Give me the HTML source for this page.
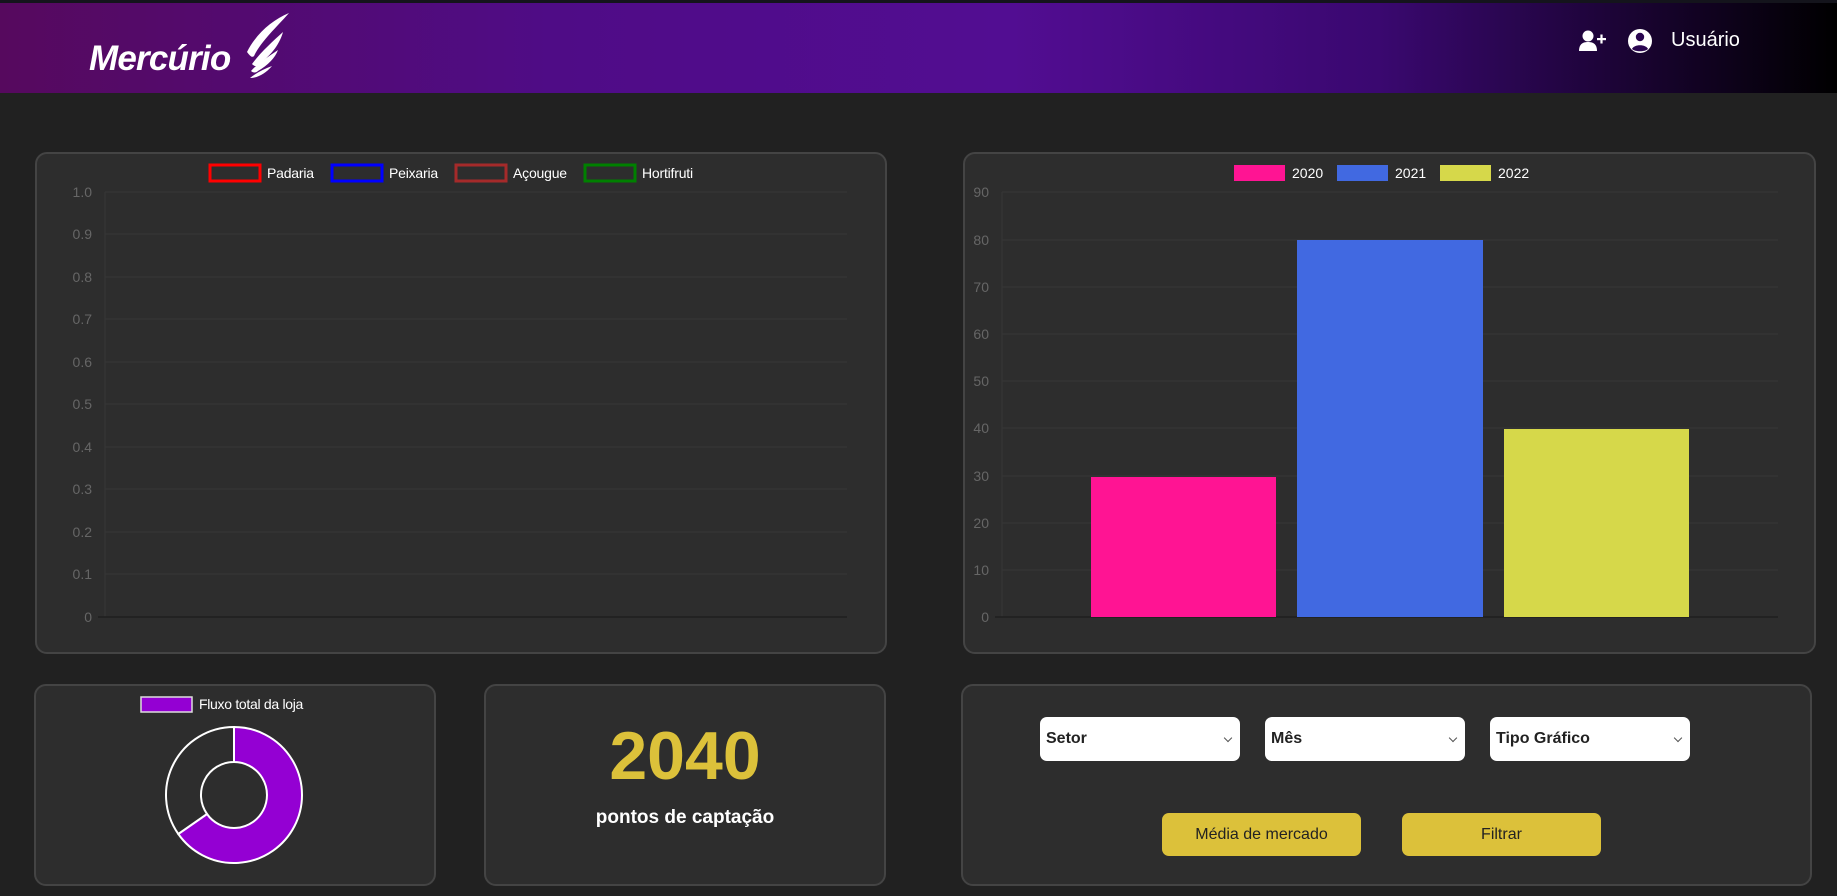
<!DOCTYPE html>
<html><head><meta charset="utf-8"><style>
*{margin:0;padding:0;box-sizing:border-box}
body{width:1837px;height:896px;background:#212121;font-family:"Liberation Sans",sans-serif;overflow:hidden;position:relative}
.hdr{position:absolute;left:0;top:0;width:1837px;height:93px;border-top:3px solid #14141c;background:linear-gradient(90deg,#56095e 0%,#4f0c86 30%,#520d92 55%,#3a0870 75%,#000 100%)}
.card{position:absolute;background:#2d2d2d;border:2px solid #444;border-radius:12px}
.sel{position:absolute;top:717px;height:44px;width:200px;background:#fff;border-radius:7px;font-weight:bold;font-size:16px;color:#222;padding:13px 6px}
.sel:after{content:"";position:absolute;right:9px;top:18px;width:5px;height:5px;border-right:1.3px solid #555;border-bottom:1.3px solid #555;transform:rotate(45deg)}
.btn{position:absolute;top:813px;height:43px;width:199px;background:#dcc13a;border-radius:7px;font-size:16px;color:#222;text-align:center;line-height:43px}
svg{position:absolute;left:0;top:0}
</style></head><body>
<div class="hdr"></div>
<div style="position:absolute;left:89px;top:39px;color:#fff;font-weight:bold;font-style:italic;font-size:35px;letter-spacing:-0.8px">Mercúrio</div>
<div style="position:absolute;left:1671px;top:29px;color:#fff;font-size:20px">Usuário</div>
<div class="card" style="left:35px;top:152px;width:852px;height:502px"></div>
<div class="card" style="left:963px;top:152px;width:853px;height:502px"></div>
<div class="card" style="left:34px;top:684px;width:402px;height:202px"></div>
<div class="card" style="left:484px;top:684px;width:402px;height:202px"></div>
<div class="card" style="left:961px;top:684px;width:851px;height:202px"></div>
<div style="position:absolute;left:484px;top:717px;width:402px;text-align:center;color:#dcc13a;font-weight:bold;font-size:68px">2040</div>
<div style="position:absolute;left:484px;top:807px;width:402px;text-align:center;color:#fff;font-weight:bold;font-size:19px">pontos de captação</div>
<div class="sel" style="left:1040px">Setor</div>
<div class="sel" style="left:1265px">Mês</div>
<div class="sel" style="left:1490px">Tipo Gráfico</div>
<div class="btn" style="left:1162px">Média de mercado</div>
<div class="btn" style="left:1402px">Filtrar</div>
<svg width="1837" height="896" font-family="Liberation Sans, sans-serif">
<g fill="#fff">
<path d="M289 13 C272 20 256 34 247 52 C250 56 252 58 254 56 C262 40 276 28 289 13Z"/>
<path d="M283 32 C272 42 260 53 252 64 C254 66 256 67 258 65 C270 56 279 46 283 32Z"/>
<path d="M278 50 C268 57 258 63 251 71 C253 73 256 73 258 71 C268 65 275 58 278 50Z"/>
<path d="M272 66 C264 69 256 73 250 78 C258 78 266 73 272 66Z"/>
</g>
<g fill="#fff">
<circle cx="1588" cy="36" r="5.5"/>
<path d="M1579 51 C1579 44 1583 42 1588 42 C1593 42 1597 44 1597 51Z"/>
<rect x="1597" y="38" width="9" height="2.2"/><rect x="1600.4" y="34.5" width="2.2" height="9"/>
<circle cx="1640" cy="41" r="12"/>
</g>
<circle cx="1640" cy="37" r="4.2" fill="#2a0650"/>
<path d="M1632 49 C1634 44 1646 44 1648 49 C1645 52 1635 52 1632 49Z" fill="#2a0650"/>
<g stroke="#363636" stroke-width="1">
<line x1="105" y1="192" x2="847" y2="192"/><line x1="105" y1="234" x2="847" y2="234"/><line x1="105" y1="277" x2="847" y2="277"/><line x1="105" y1="319" x2="847" y2="319"/><line x1="105" y1="362" x2="847" y2="362"/><line x1="105" y1="404" x2="847" y2="404"/><line x1="105" y1="447" x2="847" y2="447"/><line x1="105" y1="489" x2="847" y2="489"/><line x1="105" y1="532" x2="847" y2="532"/><line x1="105" y1="574" x2="847" y2="574"/>
<line x1="105" y1="192" x2="105" y2="617"/>
</g>
<line x1="98" y1="617" x2="847" y2="617" stroke="#1e1e1e" stroke-width="1.5"/>
<g fill="#666" font-size="14" text-anchor="end">
<text x="92" y="197">1.0</text><text x="92" y="239">0.9</text><text x="92" y="282">0.8</text><text x="92" y="324">0.7</text><text x="92" y="367">0.6</text><text x="92" y="409">0.5</text><text x="92" y="452">0.4</text><text x="92" y="494">0.3</text><text x="92" y="537">0.2</text><text x="92" y="579">0.1</text><text x="92" y="622">0</text>
</g>
<g fill="none" stroke-width="3">
<rect x="210" y="165" width="50" height="16" stroke="#f00"/>
<rect x="332" y="165" width="50" height="16" stroke="#00f"/>
<rect x="456" y="165" width="50" height="16" stroke="#a52a2a"/>
<rect x="585" y="165" width="50" height="16" stroke="#008000"/>
</g>
<g fill="#fff" font-size="14" letter-spacing="-0.2">
<text x="267" y="178">Padaria</text><text x="389" y="178">Peixaria</text><text x="513" y="178">Açougue</text><text x="642" y="178">Hortifruti</text>
</g>
<g stroke="#363636" stroke-width="1">
<line x1="1002" y1="192" x2="1778" y2="192"/><line x1="1002" y1="240" x2="1778" y2="240"/><line x1="1002" y1="287" x2="1778" y2="287"/><line x1="1002" y1="334" x2="1778" y2="334"/><line x1="1002" y1="381" x2="1778" y2="381"/><line x1="1002" y1="428" x2="1778" y2="428"/><line x1="1002" y1="476" x2="1778" y2="476"/><line x1="1002" y1="523" x2="1778" y2="523"/><line x1="1002" y1="570" x2="1778" y2="570"/>
<line x1="1002" y1="192" x2="1002" y2="617"/>
</g>
<line x1="995" y1="617" x2="1778" y2="617" stroke="#1e1e1e" stroke-width="1.5"/>
<g fill="#666" font-size="14" text-anchor="end">
<text x="989" y="197">90</text><text x="989" y="245">80</text><text x="989" y="292">70</text><text x="989" y="339">60</text><text x="989" y="386">50</text><text x="989" y="433">40</text><text x="989" y="481">30</text><text x="989" y="528">20</text><text x="989" y="575">10</text><text x="989" y="622">0</text>
</g>
<rect x="1091" y="477" width="185" height="140" fill="#ff1493"/>
<rect x="1297" y="240" width="186" height="377" fill="#4169e1"/>
<rect x="1504" y="429" width="185" height="188" fill="#d6d84a"/>
<rect x="1234" y="165" width="51" height="16" fill="#ff1493"/>
<rect x="1337" y="165" width="51" height="16" fill="#4169e1"/>
<rect x="1440" y="165" width="51" height="16" fill="#d6d84a"/>
<g fill="#fff" font-size="14"><text x="1292" y="178">2020</text><text x="1395" y="178">2021</text><text x="1498" y="178">2022</text></g>
<rect x="141" y="697" width="51" height="15" fill="#9400d3" stroke="#ddd" stroke-width="1.5"/>
<text x="199" y="709" fill="#fff" font-size="14" letter-spacing="-0.3">Fluxo total da loja</text>
<g stroke="#fff" stroke-width="2">
<path d="M234 727 A68 68 0 1 1 178.3 834 L207 814 A33 33 0 1 0 234 762Z" fill="#9400d3"/>
<path d="M178.3 834 A68 68 0 0 1 234 727 L234 762 A33 33 0 0 0 207 814Z" fill="#2d2d2d"/>
</g>
</svg>
</body></html>
